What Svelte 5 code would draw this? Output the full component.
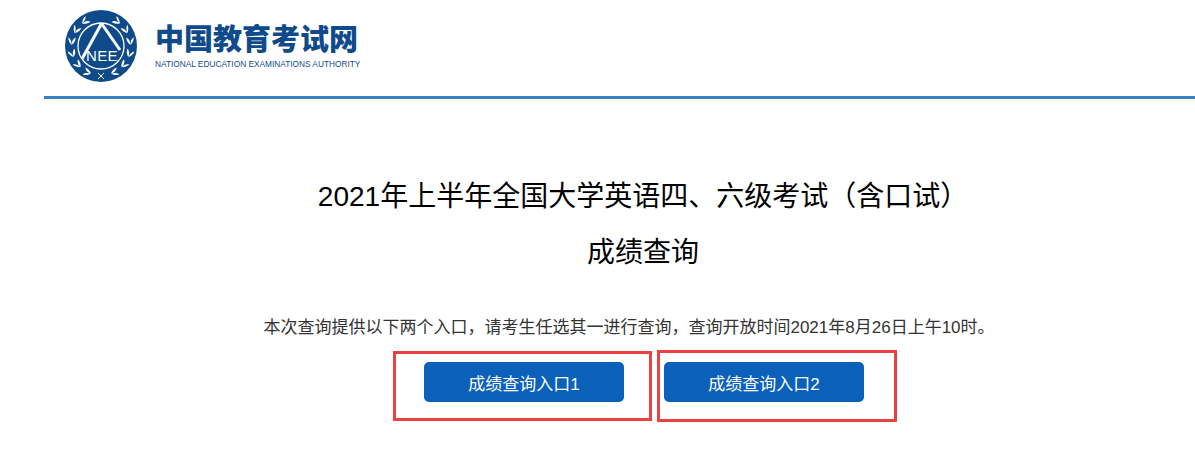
<script>
  const cjk = '"Noto Sans CJK SC", sans-serif';

  // laurel leaves: angle in degrees from the bottom of the badge, one branch per side
  const leafAngles = [20, 44, 68, 92, 116, 140];

  const entries = ['成绩查询入口1', '成绩查询入口2'];
</script>

<div class="page" style="--cjk:{cjk}">
  <header class="top">
    <svg class="badge" width="72" height="72" viewBox="0 0 72 72" aria-hidden="true">
      <circle cx="36" cy="36" r="36" fill="#0f4a8a" />
      <circle cx="36" cy="36" r="23" fill="none" stroke="#fff" stroke-width="1.3" />
      <path d="M36.5 13.5 L17 49 M36.5 13.5 L55 40" stroke="#fff" stroke-width="3" fill="none" />
      <text x="37" y="51" class="nee" text-anchor="middle">NEE</text>
      {#each [1, -1] as side}
        <g transform="translate(36 0) scale({side} 1) translate(-36 0)">
          {#each leafAngles as a}
            <g transform="rotate({a} 36 36)">
              <path d="M36 65.5 C34 67.5 31.5 69 28.5 69 C30 66.5 33 65.5 36 65.5 Z" fill="#fff" />
              <path d="M36 65.5 C33 65.5 30 64.5 28.5 61.5 C31.5 61.5 34.5 63 36 65.5 Z" fill="#fff" />
            </g>
          {/each}
        </g>
      {/each}
      <path d="M33 63 L39 69 M39 63 L33 69" stroke="#fff" stroke-width="1" />
    </svg>
    <div class="brand">
      <div class="brand-cn">中国教育考试网</div>
      <div class="brand-en">NATIONAL EDUCATION EXAMINATIONS AUTHORITY</div>
    </div>
  </header>

  <main class="content">
    <h1>2021年上半年全国大学英语四、六级考试（含口试）</h1>
    <h2>成绩查询</h2>
    <p>本次查询提供以下两个入口，请考生任选其一进行查询，查询开放时间2021年8月26日上午10时。</p>
    <div class="entries">
      {#each entries as label, i}
        <div class="entry">
          <button type="button">{label}</button>
          <span class="mark" class:second={i === 1}></span>
        </div>
      {/each}
    </div>
  </main>
</div>

<style>
  :global(body) {
    margin: 0;
    background: #fff;
  }

  .page {
    height: 475px;
    overflow: hidden;
    font-family: "Liberation Sans", var(--cjk);
  }

  .top {
    margin-left: 44px;
    height: 86px;
    border-bottom: 3px solid #3a7fc2;
    display: flex;
    align-items: flex-start;
    padding-left: 21px;
    padding-top: 10px;
  }

  .badge {
    flex: none;
  }

  .nee {
    font-family: "Liberation Sans", sans-serif;
    font-size: 15px;
    fill: #fff;
    letter-spacing: 0.4px;
  }

  .brand {
    margin-left: 18px;
    padding-top: 12px;
    color: #0f4a8a;
  }

  .brand-cn {
    font-size: 29px;
    line-height: 36px;
    font-weight: 900;
    white-space: nowrap;
  }

  .brand-en {
    font-size: 8.3px;
    line-height: 10px;
    margin-top: 1px;
    white-space: nowrap;
  }

  .content {
    padding-left: 91px;
    text-align: center;
    color: #000;
  }

  h1,
  h2 {
    font-size: 28px;
    font-weight: 400;
    margin: 0;
    line-height: 56px;
  }

  h1 {
    margin-top: 70px;
  }

  p {
    margin: 35px 0 0;
    font-size: 17px;
    line-height: 24px;
    color: #333;
    position: relative;
    left: -14px;
  }

  .entries {
    display: flex;
    justify-content: center;
    gap: 40px;
    margin-top: 22px;
    margin-left: 2px;
  }

  .entry {
    position: relative;
  }

  button {
    display: block;
    width: 200px;
    height: 40px;
    border: 0;
    border-radius: 5px;
    background: #0b60b9;
    color: #fff;
    font: inherit;
    font-size: 17px;
  }

  .mark {
    position: absolute;
    left: -31px;
    top: -11px;
    width: 259px;
    height: 70px;
    box-sizing: border-box;
    border: 3px solid #ec4141;
  }

  .mark.second {
    left: -7px;
    top: -12px;
    width: 240px;
    height: 72px;
  }
</style>
